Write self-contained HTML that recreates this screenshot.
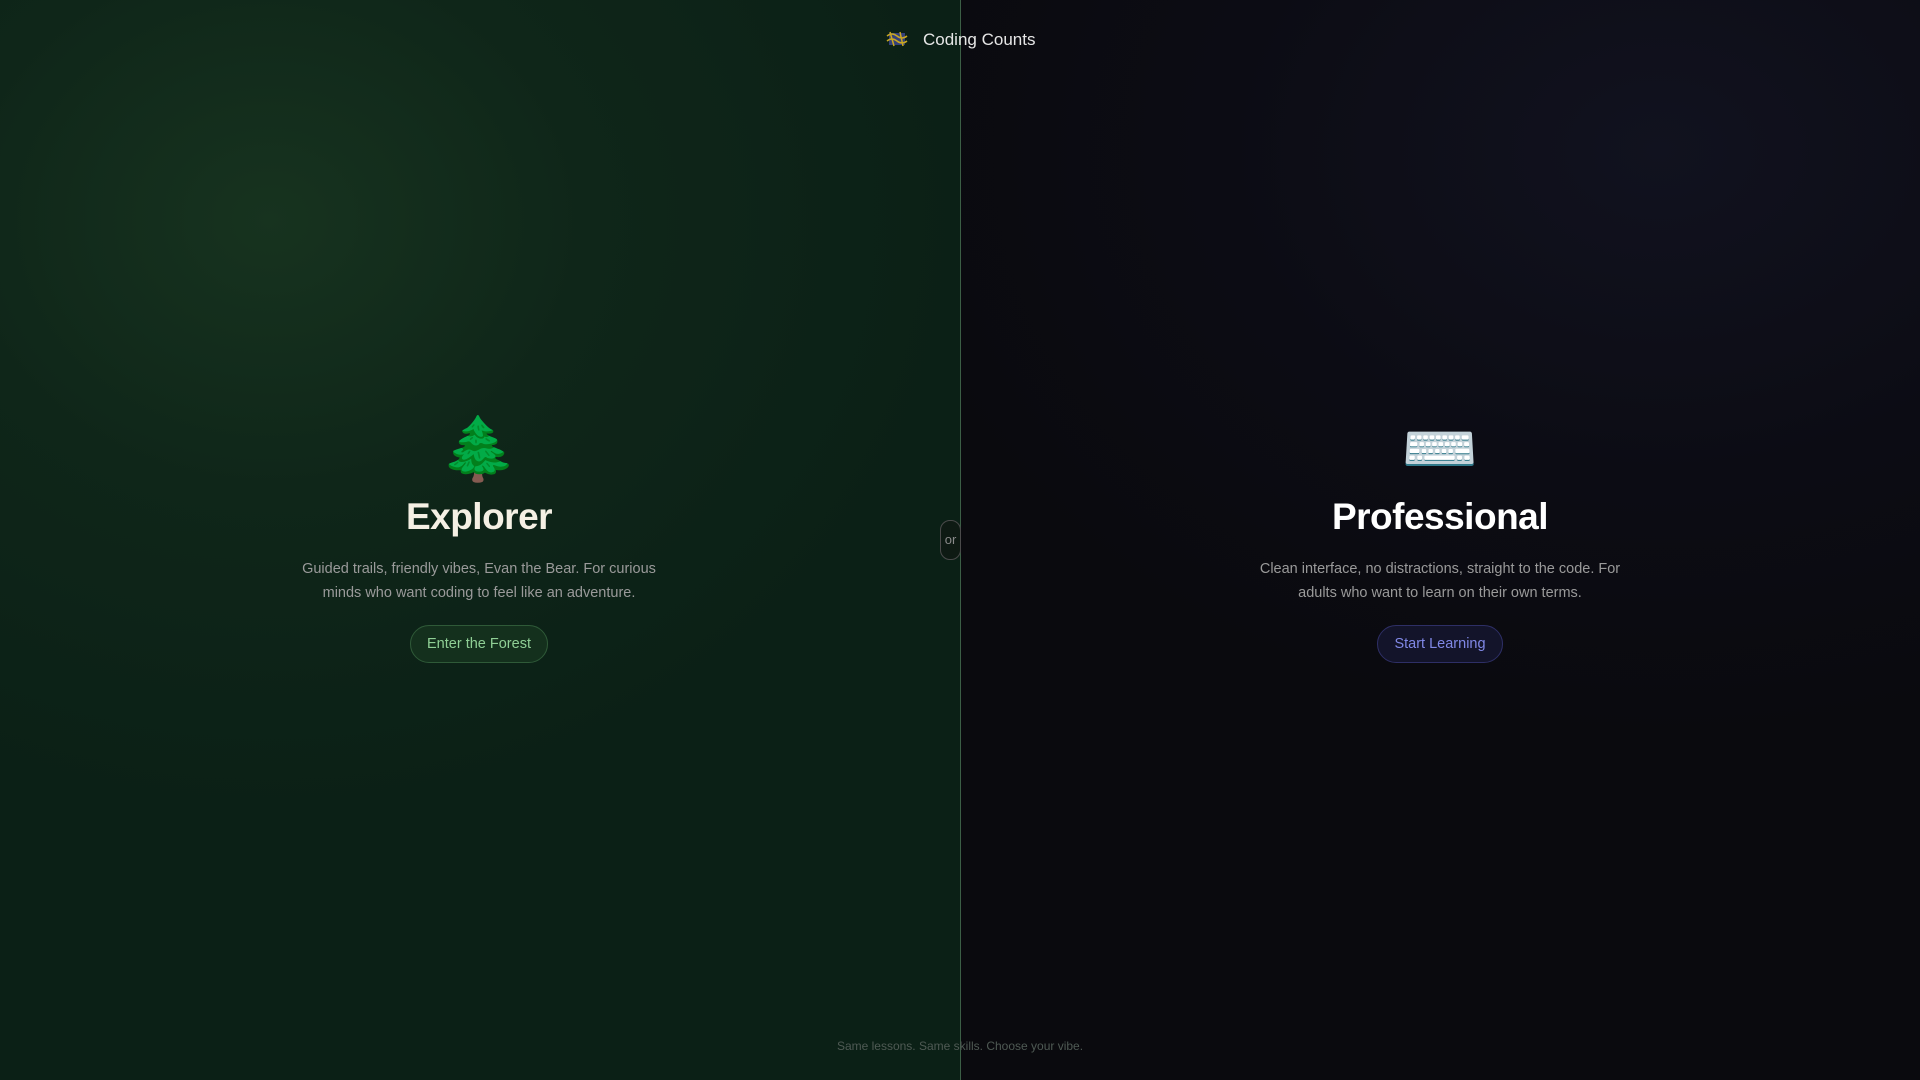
<!DOCTYPE html>
<html><head><meta charset="utf-8"><style>
html,body{margin:0;width:1920px;height:1080px;overflow:hidden;font-family:"Liberation Sans","Noto Sans CJK SC",sans-serif;}
.l{position:absolute;left:0;top:0;width:960px;height:1080px;background:radial-gradient(ellipse 700px 600px at 270px 220px,#17331f 0%,#0f2619 45%,#0b2016 100%);}
.r{position:absolute;left:960px;top:0;width:960px;height:1080px;background:radial-gradient(ellipse 800px 600px at 700px 150px,#11121f 0%,#0c0c14 55%,#0a0a0e 100%);}
.div{position:absolute;left:960px;top:0;width:1px;height:1080px;background:#3b5e45;}
.col{position:absolute;top:410px;width:520px;text-align:center;}
.emo{font-size:62px;line-height:80px;height:80px;}
h1{margin:2px 0 0;font-size:37px;line-height:50px;font-weight:bold;letter-spacing:-0.5px;}
p{margin:15px auto 0;font-size:14.5px;line-height:24px;color:#9a9a9a;width:390px;}
.btn{display:inline-block;margin-top:20px;height:36px;line-height:36px;padding:0 16px;border-radius:19px;font-size:14.5px;}
.or{position:absolute;left:940px;top:520px;width:19px;height:38px;border:1px solid #4a4a4a;border-radius:10px;background:#0e1a13;color:#8a8a8a;font-size:13px;line-height:38px;text-align:center;}
</style></head><body>
<div class="l"></div><div class="r"></div><div class="div"></div>
<svg style="position:absolute;left:886px;top:30px" width="22" height="18" viewBox="0 0 22 18">
<rect x="3" y="3" width="16" height="12" fill="#34407a"/>
<path d="M1 6 Q6 2 11 6 T21 6 M1 11 Q6 7 11 11 T21 11 M4 2 L8 16 M14 2 L17 16" stroke="#c9a722" stroke-width="1.5" fill="none"/>
</svg>
<div style="position:absolute;left:923px;top:28px;font-size:17px;line-height:24px;color:#e6e6e6;">Coding Counts</div>
<div class="col" style="left:219px;">
<div class="emo">🌲</div>
<h1 style="color:#f5f0e4;">Explorer</h1>
<p>Guided trails, friendly vibes, Evan the Bear. For curious minds who want coding to feel like an adventure.</p>
<div class="btn" style="border:1px solid #2f5a38;background:#14301d;color:#8fcf95;">Enter the Forest</div>
</div>
<div class="col" style="left:1180px;">
<div class="emo">⌨️</div>
<h1 style="color:#ffffff;">Professional</h1>
<p>Clean interface, no distractions, straight to the code. For adults who want to learn on their own terms.</p>
<div class="btn" style="border:1px solid #2e2f66;background:#13142a;color:#8088e6;">Start Learning</div>
</div>
<div class="or">or</div>
<div style="position:absolute;left:0;width:1920px;top:1039px;text-align:center;font-size:12px;color:#4f5a54;">Same lessons. Same skills. Choose your vibe.</div>
</body></html>
